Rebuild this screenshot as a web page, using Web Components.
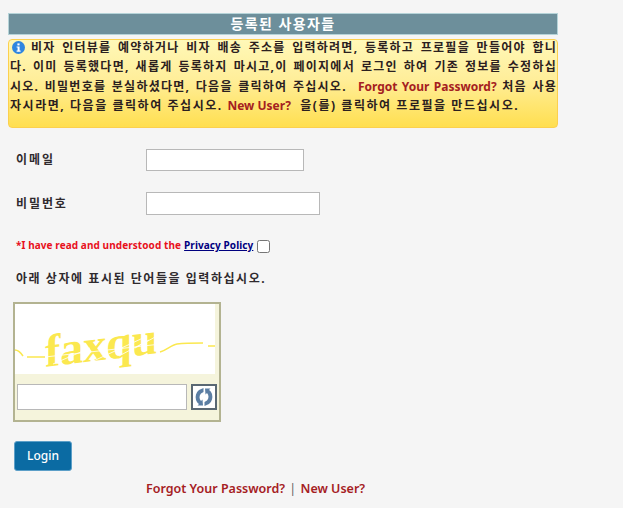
<!DOCTYPE html>
<html lang="ko">
<head>
<meta charset="utf-8">
<title>등록된 사용자들</title>
<style>
  html, body { margin: 0; height: 100%; background: #f5f5f5; }
  body { overflow: hidden; font-family: "Noto Sans", "Noto Sans CJK KR", sans-serif; }
</style>
</head>
<body>
<login-page></login-page>

<script>
const FONT = `"Noto Sans", "Noto Sans CJK KR", sans-serif`

class SectionTitle extends HTMLElement {
  constructor() {
    super()
    this.attachShadow({ mode: "open" }).innerHTML = `
      <style>
        :host {
          display: block;
          box-sizing: border-box;
          height: 22px;
          background: #6d8f9b;
          border: 1px solid #b5d3d8;
          color: #fff;
          font: 700 14px/20px ${FONT};
          letter-spacing: 1.4px;
          text-align: center;
        }
      </style>
      <slot></slot>`
  }
}

class InfoAlert extends HTMLElement {
  constructor() {
    super()
    this.attachShadow({ mode: "open" }).innerHTML = `
      <style>
        :host {
          display: block;
          box-sizing: border-box;
          height: 89px;
          padding: 0 0 0 1px;
          background: linear-gradient(#fff8b8 0%, #ffee9a 45%, #ffdf50 100%);
          border: 1px solid #fcd04e;
          border-radius: 4px;
          color: #2b2020;
          font: 700 12px/19.3px ${FONT};
          letter-spacing: 1.25px;
        }
        .body { margin-top: -2px; }
        svg { float: left; width: 13px; height: 13px; margin: 3px 6px 0 2px; }
      </style>
      <div class="body">
        <svg viewBox="0 0 13 13">
          <circle cx="6.500" cy="6.500" r="6.500" fill="#2f86e0"/>
          <rect x="5.400" y="2.400" width="2.200" height="2" fill="#fff"/>
          <path d="M4.600 5.400h3v4.200h1v1.100H4.600V9.600h1V6.500h-1z" fill="#fff"/>
        </svg>
        <slot></slot>
      </div>`
  }
}

class FormRow extends HTMLElement {
  constructor() {
    super()
    this.attachShadow({ mode: "open" }).innerHTML = `
      <style>
        :host {
          display: flex;
          align-items: center;
          color: #2f2a2e;
          font: 700 12px/16px ${FONT};
        }
        label { width: 130px; padding-left: 8px; letter-spacing: 1.9px; }
        input {
          box-sizing: border-box;
          height: var(--h, 22px);
          width: var(--w, 158px);
          background: #fff;
          border: 1px solid #b8b8b8;
          padding: 0;
          margin: 0;
        }
      </style>
      <label><slot></slot></label><input type="${this.getAttribute("type") || "text"}">`
  }
}

class CaptchaBox extends HTMLElement {
  constructor() {
    super()
    this.attachShadow({ mode: "open" }).innerHTML = `
      <style>
        :host {
          display: block;
          box-sizing: border-box;
          width: 208px;
          height: 120px;
          background: #f5f4dc;
          border: 2px solid #b3b391;
        }
        .pic { display: block; width: 200px; height: 70px; background: #fff; overflow: visible; }
        .pic text { font: 700 46px "Liberation Serif", serif; fill: #fbe84f; }
        .row { display: flex; align-items: flex-start; gap: 4px; padding: 10px 0 0 2px; }
        input {
          box-sizing: border-box;
          width: 170px;
          height: 26px;
          margin: 0;
          padding: 0;
          background: #fff;
          border: 1px solid #b8b8b8;
        }
        button {
          box-sizing: border-box;
          width: 26px;
          height: 26px;
          padding: 0;
          background: #fff;
          border: 2px solid #5a6873;
          display: flex;
          align-items: center;
          justify-content: center;
        }
      </style>
      <svg class="pic" viewBox="0 0 200 70">
        <path d="M0 46c4 0 6 3 8 6M12 53h18M145 48c7-2 11-7 17-8 8-1 18-1 26-1M193 42h7" fill="none" stroke="#fbe84f" stroke-width="1.500"/>
        <text transform="translate(30 63) skewY(-7)">faxqu</text>
        <path d="M30 53 146 40M38 60 75 44M72 60 128 34M104 52l30-16M120 44l22-12" fill="none" stroke="#fff" stroke-width=".8"/>
      </svg>
      <div class="row">
        <input type="text">
        <button type="button" aria-label="refresh">
          <svg width="18" height="20" viewBox="0 0 18 20" fill="#5b7ea3">
            <path d="M8.500 1 4 3C1 5.500 0 9 1 13c.5 1.500 1.500 3 3 4l-1.500 1.500H8l-.5-6L6 14C4 12 4 8.500 6 6.500L8.500 5z"/>
            <path d="M9.500 19 14 17c3-2.500 4-6 3-10-.5-1.500-1.500-3-3-4l1.500-1.500H10l.5 6L12 6c2 2 2 5.500 0 7.500L9.500 15z"/>
          </svg>
        </button>
      </div>`
  }
}

class LoginPage extends HTMLElement {
  constructor() {
    super()
    this.attachShadow({ mode: "open" }).innerHTML = `
      <style>
        :host {
          display: block;
          width: 550px;
          padding: 13px 0 0 8px;
          font: 700 12px/16px ${FONT};
          color: #2f2a2e;
        }
        a { text-decoration: none; color: #a5201f; }
        info-alert { margin-top: 4px; }
        info-alert a { letter-spacing: 0; }
        info-alert span { display: block; white-space: nowrap; text-align: justify; text-align-last: justify; }
        info-alert span:last-child { text-align-last: left; letter-spacing: 1.55px; }
        .email { margin-top: 21px; }
        .pass { margin-top: 21px; --w: 174px; --h: 23px; }
        .policy {
          display: flex;
          align-items: center;
          margin: 22px 0 0 8px;
          height: 16px;
          font-size: 10px;
          letter-spacing: .08px;
          color: #e8101c;
        }
        .policy a { color: #00007f; text-decoration: underline; margin-left: 3px; }
        .policy input {
          box-sizing: border-box;
          width: 13px; height: 13px;
          margin: 2px 0 0 4px;
          appearance: none;
          background: #fff;
          border: 1px solid #767676;
          border-radius: 2.500px;
        }
        .hint { margin: 18px 0 0 8px; letter-spacing: 1.550px; }
        captcha-box { margin: 15px 0 0 5px; }
        .login {
          display: block;
          box-sizing: border-box;
          width: 58px;
          height: 30px;
          margin: 19px 0 0 6px;
          background: #0b6ba3;
          border: 1px solid #5c9fc8;
          border-radius: 3px;
          color: #fff;
          font: 500 12px/1 ${FONT};
        }
        .links {
          margin: 10px 0 0 138px;
          font-size: 12.500px;
          font-weight: 600;
        }
        .links span { color: #666; font-weight: 400; margin: 0 1px; }
      </style>
      <section-title>등록된 사용자들</section-title>
      <info-alert><span>비자 인터뷰를 예약하거나 비자 배송 주소를 입력하려면, 등록하고 프로필을 만들어야 합니</span><span>다. 이미 등록했다면, 새롭게 등록하지 마시고,이 페이지에서 로그인 하여 기존 정보를 수정하십</span><span>시오. 비밀번호를 분실하셨다면, 다음을 클릭하여 주십시오. &nbsp;<a href="#">Forgot Your Password?</a> 처음 사용</span><span>자시라면, 다음을 클릭하여 주십시오. <a href="#">New User?</a> &nbsp;을(를) 클릭하여 프로필을 만드십시오.</span></info-alert>
      <form-row class="email" type="text">이메일</form-row>
      <form-row class="pass" type="password">비밀번호</form-row>
      <div class="policy">*I have read and understood the <a href="#">Privacy Policy</a><input type="checkbox"></div>
      <div class="hint">아래 상자에 표시된 단어들을 입력하십시오.</div>
      <captcha-box></captcha-box>
      <button class="login" type="button">Login</button>
      <div class="links"><a href="#">Forgot Your Password?</a> <span>|</span> <a href="#">New User?</a></div>`
  }
}

customElements.define("section-title", SectionTitle)
customElements.define("info-alert", InfoAlert)
customElements.define("form-row", FormRow)
customElements.define("captcha-box", CaptchaBox)
customElements.define("login-page", LoginPage)
</script>
</body>
</html>
